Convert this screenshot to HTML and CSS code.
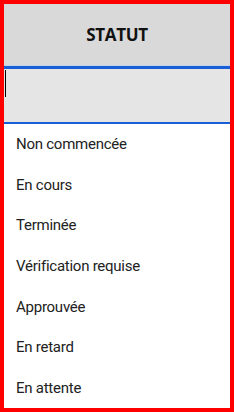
FILE: index.html
```html
<!DOCTYPE html>
<html lang="fr">
<head>
  <meta charset="UTF-8" />
  <meta name="viewport" content="width=device-width, initial-scale=1.0"/>
  <title>Statut</title>
  <link rel="stylesheet" href="styles.css">
</head>
<body>

  <div class="panel">
    <div class="header">STATUT</div>

    <div class="search">
      <span class="caret"></span>
    </div>

    <ul class="options">
      <li>Non commencée</li>
      <li>En cours</li>
      <li>Terminée</li>
      <li>Vérification requise</li>
      <li>Approuvée</li>
      <li>En retard</li>
      <li>En attente</li>
    </ul>
  </div>

</body>
</html>
```

FILE: styles.css
```css
* {
  box-sizing: border-box;
}

body {
  margin: 0;
  padding: 0;
  font-family: Roboto, "Liberation Sans", sans-serif;
  background: white;
}

.panel {
  width: 234px;
  height: 412px;
  border: 4px solid #ff0000;
  background: white;
  display: flex;
  flex-direction: column;
}

.header {
  height: 62px;
  background: #d9d9d9;
  border-bottom: 1px solid #c3d3ee;
  display: flex;
  align-items: center;
  justify-content: center;
  font-family: "Open Sans", "Liberation Sans", sans-serif;
  font-weight: bold;
  font-size: 17px;
  letter-spacing: -0.3px;
  color: #111;
}

.search {
  height: 58px;
  background: #e5e5e5;
  border-top: 3px solid #1a5fd6;
  border-bottom: 2px solid #1a5fd6;
  padding: 1px 0 0 1px;
}

.caret {
  display: block;
  width: 1px;
  height: 27px;
  background: #000;
}

.options {
  list-style: none;
  margin: 0;
  padding: 0;
  flex: 1;
  display: flex;
  flex-direction: column;
}

.options li {
  flex: 1;
  display: flex;
  align-items: center;
  padding-left: 12px;
  font-size: 15px;
  letter-spacing: -0.25px;
  color: #222;
}
```
